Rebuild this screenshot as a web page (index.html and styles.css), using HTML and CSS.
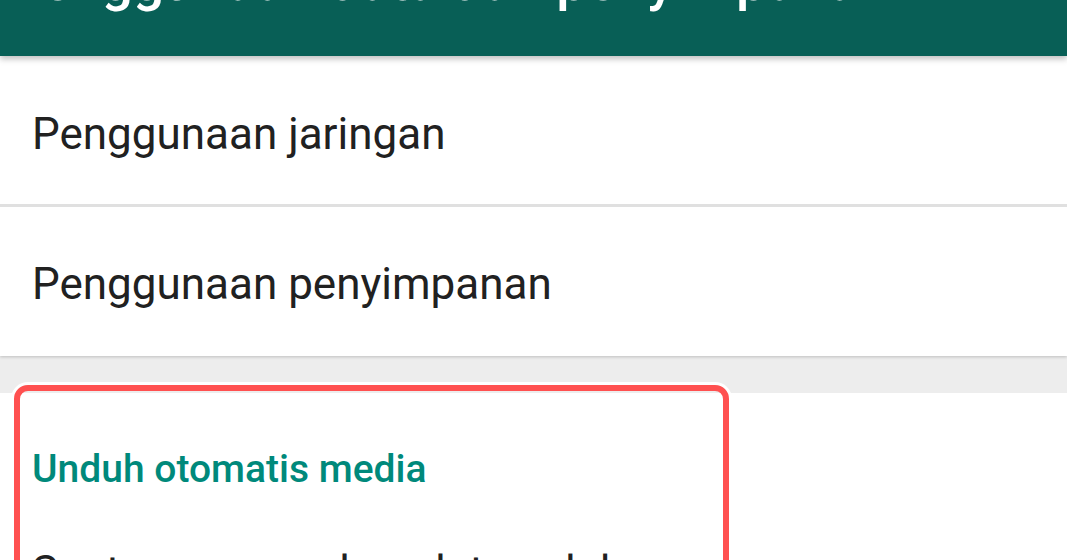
FILE: index.html
```html
<!DOCTYPE html>
<html lang="id">
<head>
    <meta charset="UTF-8">
    <meta name="viewport" content="width=device-width, initial-scale=1.0">
    <title>Penggunaan data dan penyimpanan</title>
    <link rel="stylesheet" href="styles.css">
</head>
<body>

    <!-- bilah atas -->
    <header class="appbar">
        <svg class="back" viewBox="0 0 24 24" width="48" height="48">
            <path d="M20 11H7.83l5.59-5.59L12 4l-8 8 8 8 1.41-1.41L7.83 13H20v-2z" fill="#fff"/>
        </svg>
        <h1 class="title">Penggunaan data dan penyimpanan</h1>
    </header>

    <!-- penggunaan -->
    <div class="group">
        <div class="row first">Penggunaan jaringan</div>
        <div class="row last">Penggunaan penyimpanan</div>
    </div>

    <div class="spacer"></div>

    <!-- unduh otomatis -->
    <div class="section">
        <div class="highlight"></div>
        <div class="section-title">Unduh otomatis media</div>
        <div class="item">Saat menggunakan data seluler</div>
    </div>

</body>
</html>
```

FILE: styles.css
```css
body {
    margin: 0;
    background-color: #fff;
    font-family: Roboto, "Noto Sans", sans-serif;
    overflow: hidden;
}

.appbar {
    position: relative;
    z-index: 2;
    height: 105px;
    margin-top: -49px;
    background-color: #085f56;
    box-shadow: 0 3px 6px rgba(0, 0, 0, 0.25);
    display: flex;
    align-items: flex-start;
}

.back {
    margin: 9px 0 0 38px;
    flex-shrink: 0;
}

.title {
    margin: 0 0 0 -79px;
    font-size: 55px;
    font-weight: 500;
    line-height: 60px;
    color: #fff;
    white-space: nowrap;
}

.group {
    position: relative;
    z-index: 1;
    background-color: #fff;
    box-shadow: 0 1px 3px rgba(0, 0, 0, 0.2);
}

.row {
    height: 149px;
    padding: 4px 0 0 32px;
    box-sizing: border-box;
    display: flex;
    align-items: center;
    font-size: 44px;
    color: #212121;
}

.row.first {
    height: 151px;
    padding-top: 8px;
    border-bottom: 3px solid #e0e0e0;
}

.spacer {
    height: 37px;
    background-color: #ededed;
}

.section {
    position: relative;
    padding: 53px 0 0 32px;
    height: 300px;
    background-color: #fff;
}

.highlight {
    position: absolute;
    left: 14px;
    top: -8px;
    width: 703px;
    height: 300px;
    border: 6px solid #ff5050;
    border-radius: 14px;
    box-shadow: 0 0 0 3px #fff;
}

.section-title {
    font-size: 39px;
    font-weight: 500;
    line-height: 1.2;
    color: #00897b;
}

.item {
    margin-top: 53px;
    font-size: 44px;
    line-height: 52px;
    color: #212121;
}
```
